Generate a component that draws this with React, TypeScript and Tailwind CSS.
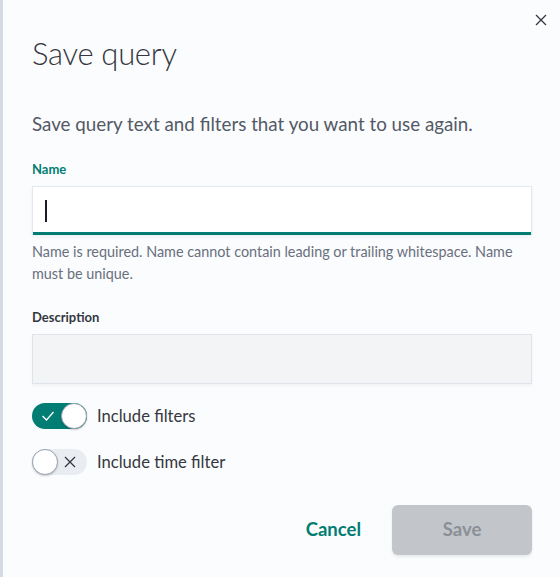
import React from "react";

export default function App() {
  return (
    <div
      className="w-[560px] h-[577px] bg-[#fbfcfd] border-l-[3px] border-[#d3dae6] relative overflow-hidden"
      style={{ fontFamily: "Lato, 'Open Sans', sans-serif" }}
    >
      <button className="absolute right-[12px] top-[13px] text-[#343741]">
        <svg width="14" height="14" viewBox="0 0 14 14" fill="none" stroke="currentColor" strokeWidth="1.3">
          <path d="M2 2 L12 12 M12 2 L2 12" />
        </svg>
      </button>
      <div className="pl-[29px] pr-[28px] pt-[31px]">
        <h1 className="text-[31px] font-light text-[#343741] leading-[44px] tracking-[-0.3px]">Save query</h1>
        <p className="mt-[36px] text-[18.8px] text-[#535966] leading-[26px]">
          Save query text and filters that you want to use again.
        </p>
        <div className="mt-[23px]">
          <label className="block text-[13px] font-bold text-[#017d73] leading-[18px]">Name</label>
          <div className="mt-[8px] h-[49px] bg-white border border-[#e3e8ee] border-b-0 shadow-[0_2px_4px_rgba(0,0,0,0.05)] relative flex items-center pl-[12px]">
            <div className="w-[1.5px] h-[22px] bg-[#1a1c21]" />
            <div className="absolute left-0 right-0 bottom-0 h-[3px] bg-[#017d73]" />
          </div>
          <p className="mt-[6px] text-[14.4px] text-[#69707d] leading-[22px] pr-[14px]">
            Name is required. Name cannot contain leading or trailing whitespace. Name must be unique.
          </p>
        </div>
        <div className="mt-[23px]">
          <label className="block text-[13px] font-bold text-[#343741] leading-[18px]">Description</label>
          <div className="mt-[8px] h-[50px] bg-[#f3f4f6] border border-[#dfe4ea] shadow-[0_2px_3px_rgba(0,0,0,0.04)]" />
        </div>
        <div className="mt-[19px] flex items-center gap-[10px]">
          <div className="w-[55px] h-[26px] rounded-full bg-[#017d73] relative">
            <svg className="absolute left-[9px] top-[7px]" width="14" height="12" viewBox="0 0 14 12" fill="none" stroke="white" strokeWidth="1.3">
              <path d="M1.5 6 L5.5 10 L12.5 2" />
            </svg>
            <div className="absolute right-0 top-0 w-[26px] h-[26px] rounded-full bg-white border border-[#98a2b3] shadow-[0_1px_2px_rgba(0,0,0,0.2)]" />
          </div>
          <span className="text-[16.6px] text-[#343741]">Include filters</span>
        </div>
        <div className="mt-[20px] flex items-center gap-[10px]">
          <div className="w-[55px] h-[26px] rounded-full bg-[#e9edf2] relative">
            <div className="absolute left-0 top-0 w-[26px] h-[26px] rounded-full bg-white border border-[#98a2b3] shadow-[0_1px_2px_rgba(0,0,0,0.2)]" />
            <svg className="absolute left-[32px] top-[7px]" width="12" height="12" viewBox="0 0 12 12" fill="none" stroke="#343741" strokeWidth="1.3">
              <path d="M1 1 L11 11 M11 1 L1 11" />
            </svg>
          </div>
          <span className="text-[16.6px] text-[#343741]">Include time filter</span>
        </div>
        <div className="mt-[30px] flex items-center justify-end gap-[31px]">
          <button className="text-[18.5px] font-bold text-[#017d73]">Cancel</button>
          <button className="w-[140px] h-[50px] rounded-[6px] bg-[#c2c5ca] text-[18.5px] font-bold text-[#8b8f97] shadow-[0_2px_3px_rgba(0,0,0,0.08)]">
            Save
          </button>
        </div>
      </div>
    </div>
  );
}
